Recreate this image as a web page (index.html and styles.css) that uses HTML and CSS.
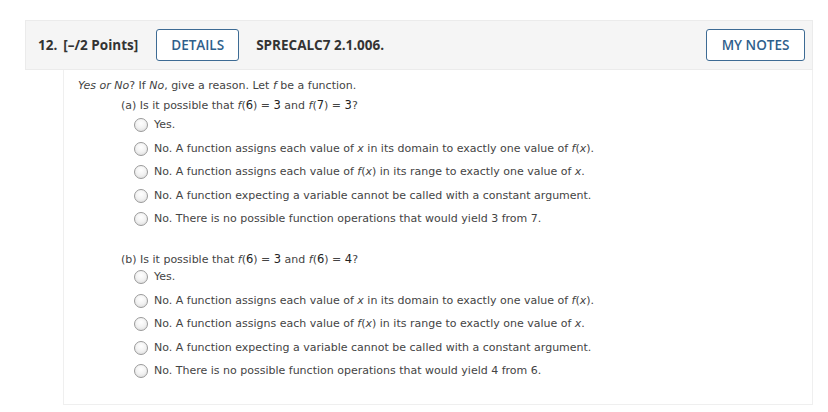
FILE: index.html
```html
<!DOCTYPE html>
<html>
<head>
<meta charset="utf-8">
<link rel="stylesheet" href="styles.css">
</head>
<body>
<div class="page">
  <div class="qhead">
    <span class="qnum">12.</span>
    <span class="qpts">[–/2 Points]</span>
    <button class="btn details">DETAILS</button>
    <span class="qcode">SPRECALC7 2.1.006.</span>
    <span class="spacer"></span>
    <button class="btn notes">MY NOTES</button>
  </div>
  <div class="qbody">
    <div class="stem"><i>Yes or No</i>? If <i>No</i>, give a reason. Let <i>f</i> be a function.</div>
    <div class="part">
      <div class="ptitle">(a) Is it possible that <i>f</i>(<span class="m">6</span>) = <span class="m">3</span> and <i>f</i>(<span class="m">7</span>) = <span class="m">3</span>?</div>
      <div class="opt first"><span class="radio"></span><span class="txt">Yes.</span></div>
      <div class="opt"><span class="radio"></span><span class="txt">No. A function assigns each value of <i>x</i> in its domain to exactly one value of <i>f</i>(<i>x</i>).</span></div>
      <div class="opt"><span class="radio"></span><span class="txt">No. A function assigns each value of <i>f</i>(<i>x</i>) in its range to exactly one value of <i>x</i>.</span></div>
      <div class="opt"><span class="radio"></span><span class="txt">No. A function expecting a variable cannot be called with a constant argument.</span></div>
      <div class="opt"><span class="radio"></span><span class="txt">No. There is no possible function operations that would yield 3 from 7.</span></div>
    </div>
    <div class="part second">
      <div class="ptitle">(b) Is it possible that <i>f</i>(<span class="m">6</span>) = <span class="m">3</span> and <i>f</i>(<span class="m">6</span>) = <span class="m">4</span>?</div>
      <div class="opt first"><span class="radio"></span><span class="txt">Yes.</span></div>
      <div class="opt"><span class="radio"></span><span class="txt">No. A function assigns each value of <i>x</i> in its domain to exactly one value of <i>f</i>(<i>x</i>).</span></div>
      <div class="opt"><span class="radio"></span><span class="txt">No. A function assigns each value of <i>f</i>(<i>x</i>) in its range to exactly one value of <i>x</i>.</span></div>
      <div class="opt"><span class="radio"></span><span class="txt">No. A function expecting a variable cannot be called with a constant argument.</span></div>
      <div class="opt"><span class="radio"></span><span class="txt">No. There is no possible function operations that would yield 4 from 6.</span></div>
    </div>
  </div>
</div>
</body>
</html>
```
FILE: styles.css
```css
* { box-sizing: border-box; }
html, body { margin: 0; padding: 0; background: #fff; }
.page {
  width: 828px;
  padding: 20px 15px 0 25px;
}
.qhead {
  width: 788px;
  height: 50px;
  background: #f5f5f5;
  border: 1px solid #ebebeb;
  display: flex;
  align-items: center;
  padding: 0 7px 0 12px;
  font-family: "Open Sans", "Liberation Sans", sans-serif;
  font-weight: 700;
  font-size: 13.5px;
  color: #333;
}
.qnum { margin-right: 6px; }
.qpts { margin-right: 18px; }
.btn {
  font-family: "Open Sans", "Liberation Sans", sans-serif;
  font-weight: 600;
  font-size: 13.5px;
  color: #2f5f8c;
  background: #fff;
  border: 1.5px solid #3d6b94;
  border-radius: 3px;
  height: 32px;
  padding: 0;
}
.details { width: 83px; margin-right: 17px; }
.notes { width: 99px; }
.spacer { flex: 1; }
.qbody {
  margin-left: 38px;
  width: 750px;
  border: 1px solid #efefef;
  border-top: none;
  padding: 8px 0 25px 14px;
  font-family: "DejaVu Sans", Verdana, sans-serif;
  font-size: 11px;
  color: #444;
  line-height: 16px;
}
.stem { height: 16px; white-space: nowrap; }
.ptitle { white-space: nowrap; }
.part { margin-left: 43px; margin-top: 3px; }
.part.second { margin-top: 24px; }
.m { font-size: 11.5px; color: #222; }
.opt {
  display: flex;
  align-items: center;
  height: 16px;
  margin-top: 7.5px;
  margin-left: 13px;
  white-space: nowrap;
}
.opt.first { margin-top: 3px; }
.second .opt.first { margin-top: 1px; }
.radio {
  width: 14px;
  height: 14px;
  border-radius: 50%;
  border: 1px solid #9a9a9a;
  background: radial-gradient(circle at 50% 35%, #ffffff 0%, #f2f2f2 50%, #d6d6d6 100%);
  margin-right: 6px;
  flex: none;
}
```
